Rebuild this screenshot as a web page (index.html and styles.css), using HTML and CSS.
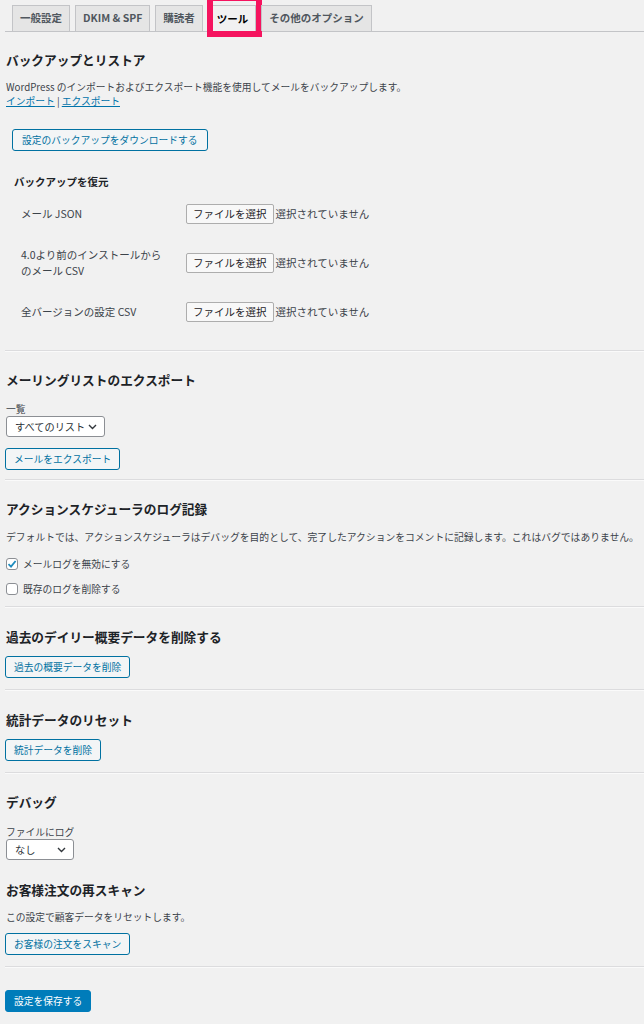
FILE: index.html
```html
<!DOCTYPE html>
<html lang="ja">

<head>
    <title>ツール</title>
    <meta charset="utf-8">
    <meta name="viewport" content="width=device-width, initial-scale=1.0">
    <link rel="stylesheet" href="styles.css">
</head>

<body>

    <nav class="tabs">
        <a class="tab">一般設定</a>
        <a class="tab">DKIM &amp; SPF</a>
        <a class="tab">購読者</a>
        <a class="tab aktiv">ツール</a>
        <a class="tab">その他のオプション</a>
    </nav>

    <main class="wrap">

        <h2 class="titel forste">バックアップとリストア</h2>
        <p class="tekst para1">WordPress のインポートおよびエクスポート機能を使用してメールをバックアップします。<br>
            <a href="#">インポート</a> | <a href="#">エクスポート</a></p>

        <button class="knap knap-backup">設定のバックアップをダウンロードする</button>

        <h3 class="undertitel">バックアップを復元</h3>
        <div class="gendan">
            <div class="raekke">
                <span class="felt">メール JSON</span>
                <span class="fil"><span class="filknap">ファイルを選択</span>選択されていません</span>
            </div>
            <div class="raekke">
                <span class="felt">4.0より前のインストールから<br>のメール CSV</span>
                <span class="fil"><span class="filknap">ファイルを選択</span>選択されていません</span>
            </div>
            <div class="raekke">
                <span class="felt">全バージョンの設定 CSV</span>
                <span class="fil"><span class="filknap">ファイルを選択</span>選択されていません</span>
            </div>
        </div>

        <hr class="streg streg1">

        <h2 class="titel">メーリングリストのエクスポート</h2>
        <label class="lille">一覧</label>
        <div class="vaelg vaelg-liste">すべてのリスト
            <svg width="9" height="6" viewBox="0 0 9 6"><path d="M1 1 L4.5 4.5 L8 1" fill="none" stroke="#32373c" stroke-width="1.4"/></svg>
        </div>
        <button class="knap knap-eksport">メールをエクスポート</button>

        <hr class="streg streg2">

        <h2 class="titel">アクションスケジューラのログ記録</h2>
        <p class="tekst langlinje">デフォルトでは、アクションスケジューラはデバッグを目的として、完了したアクションをコメントに記録します。これはバグではありません。</p>
        <div class="tjek tjek1">
            <span class="boks"><svg width="12" height="12" viewBox="0 0 12 12"><path d="M2.5 6.2 L5 8.6 L9.6 3" fill="none" stroke="#1e8cbe" stroke-width="1.8"/></svg></span>
            メールログを無効にする
        </div>
        <div class="tjek tjek2">
            <span class="boks"></span>
            既存のログを削除する
        </div>

        <hr class="streg streg3">

        <h2 class="titel titel-kort">過去のデイリー概要データを削除する</h2>
        <button class="knap knap-sek">過去の概要データを削除</button>

        <hr class="streg streg4">

        <h2 class="titel titel-kort">統計データのリセット</h2>
        <button class="knap knap-sek">統計データを削除</button>

        <hr class="streg streg4">

        <h2 class="titel">デバッグ</h2>
        <label class="lille lille-log">ファイルにログ</label>
        <div class="vaelg vaelg-log">なし
            <svg width="9" height="6" viewBox="0 0 9 6"><path d="M1 1 L4.5 4.5 L8 1" fill="none" stroke="#32373c" stroke-width="1.4"/></svg>
        </div>

        <h2 class="titel titel-scan">お客様注文の再スキャン</h2>
        <p class="tekst para-scan">この設定で顧客データをリセットします。</p>
        <button class="knap knap-scan">お客様の注文をスキャン</button>

        <hr class="streg streg5">

        <button class="knap primaer">設定を保存する</button>

    </main>

</body>

</html>
```

FILE: styles.css
```css
html,
body {
    margin: 0;
    background: #f1f1f1;
    overflow: hidden;
}

body {
    font-family: "Noto Sans CJK JP", "Noto Sans", sans-serif;
    color: #3c434a;
    font-size: 9.75px;
}

.tabs {
    display: flex;
    gap: 5px;
    margin-left: 5px;
    padding: 5px 0 0 7px;
    border-bottom: 1px solid #c3c4c7;
    height: 26px;
}

.tab {
    position: relative;
    display: flex;
    align-items: center;
    padding: 0 7px;
    height: 25px;
    background: #e5e5e5;
    border: 1px solid #c3c4c7;
    border-bottom: none;
    font-size: 10.5px;
    font-weight: bold;
    color: #50575e;
    line-height: 1;
}

.tab.aktiv {
    background: #f1f1f1;
    color: #000;
    height: 26px;
    margin-left: 1px;
    margin-bottom: -1px;
}

.tab.aktiv::after {
    content: "";
    position: absolute;
    left: -3px;
    right: -7px;
    top: -11px;
    bottom: -5px;
    border: 6px solid #f5145f;
}

.wrap {
    padding-left: 5px;
}

.titel {
    font-size: 12.7px;
    font-weight: bold;
    color: #1d2327;
    line-height: 17px;
    margin: 19px 0 0 1px;
}

.titel-kort {
    margin-top: 20px;
}

.tekst {
    margin: 12px 0 0 1px;
    line-height: 14px;
    color: #3c434a;
}

.tekst a {
    color: #0073aa;
    text-decoration: underline;
}

.langlinje {
    white-space: nowrap;
    margin-top: 13px;
    font-size: 9.8px;
}

.knap {
    display: block;
    height: 22px;
    padding: 0 8px;
    border: 1px solid #0071a1;
    border-radius: 3px;
    background: #f3f5f6;
    color: #0071a1;
    font-family: inherit;
    font-size: 9.75px;
    line-height: 20px;
}

.knap-backup {
    margin: 21px 0 0 7px;
    padding: 0 9px;
}

.knap-eksport {
    margin-top: 11px;
}

.knap-sek {
    margin-top: 11px;
}

.knap-scan {
    margin-top: 9px;
}

.primaer {
    margin-top: 22px;
    background: #007cba;
    border-color: #007cba;
    color: #fff;
}

.undertitel {
    font-size: 10.5px;
    font-weight: bold;
    color: #1d2327;
    line-height: 14px;
    margin: 24px 0 0 9px;
}

.gendan {
    padding-left: 16px;
}

.raekke {
    display: grid;
    grid-template-columns: 165px auto;
    align-items: center;
    height: 49px;
}

.felt {
    font-size: 10.5px;
    line-height: 16px;
    color: #3c434a;
}

.fil {
    display: flex;
    align-items: center;
    gap: 2px;
    font-size: 10.5px;
    color: #3c434a;
}

.filknap {
    height: 18px;
    padding: 0 6px;
    line-height: 18px;
    background: #f8f8f8;
    border: 1px solid #adadad;
    border-radius: 2px;
    color: #1d2327;
}

.streg {
    border: none;
    border-top: 1px solid #dcdcde;
    border-bottom: 1px solid #fafafa;
    margin: 14px 0 0;
}

.streg2 {
    margin-top: 9px;
}

.streg3 {
    margin-top: 9px;
}

.streg4,
.streg5 {
    margin-top: 11px;
}

.lille {
    display: block;
    margin: 15px 0 0 1px;
    line-height: 13px;
    color: #3c434a;
}

.lille-log {
    margin-top: 16px;
}

.vaelg {
    display: flex;
    align-items: center;
    justify-content: space-between;
    box-sizing: border-box;
    height: 21px;
    margin: 0 0 0 1px;
    padding: 0 7px 0 8px;
    background: #fff;
    border: 1px solid #8c8f94;
    border-radius: 3px;
    font-size: 10.2px;
    color: #2c3338;
}

.vaelg-liste {
    width: 99px;
}

.vaelg-log {
    width: 68px;
}

.tjek {
    display: flex;
    align-items: center;
    gap: 5px;
    height: 16px;
    margin: 12px 0 0 1px;
    color: #3c434a;
}

.tjek2 {
    margin-top: 9px;
}

.boks {
    box-sizing: border-box;
    width: 12px;
    height: 12px;
    background: #fff;
    border: 1px solid #8c8f94;
    border-radius: 3px;
    display: flex;
}

.boks svg {
    margin: -1px;
}

.titel-scan {
    margin-top: 21px;
}

.para-scan {
    margin-top: 12px;
}
```
